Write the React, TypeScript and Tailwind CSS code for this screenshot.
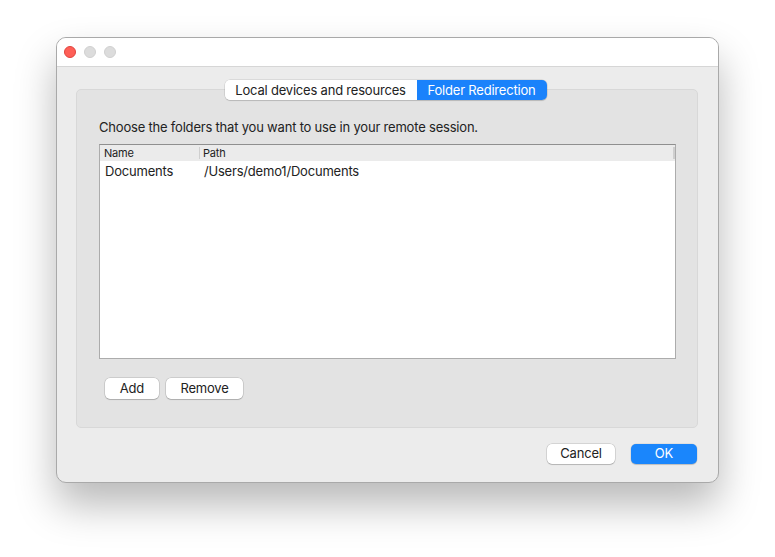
import React from "react";

export default function App() {
  return (
    <div
      className="w-[775px] h-[557px] bg-white pt-[37px] pl-[56px] tracking-[-0.2px]"
      style={{ fontFamily: 'Inter, "Liberation Sans", sans-serif' }}
    >
      <div className="w-[663px] h-[446px] rounded-[10px] border border-[#a9a9a9] bg-[#ececec] shadow-[0_22px_40px_rgba(0,0,0,0.28)] overflow-hidden flex flex-col">
        {/* title bar */}
        <div className="h-[29px] bg-white border-b border-[#d6d6d6] flex items-center pl-[7px] gap-[8px] shrink-0">
          <span className="w-[12px] h-[12px] rounded-full bg-[#fe5f57] border border-[#e0443e]" />
          <span className="w-[12px] h-[12px] rounded-full bg-[#dcdcdc] border border-[#d0d0d0]" />
          <span className="w-[12px] h-[12px] rounded-full bg-[#dcdcdc] border border-[#d0d0d0]" />
        </div>

        <div className="flex flex-col pl-[19px] pr-[20px] pt-[13px]">
          {/* tabs */}
          <div className="flex justify-center relative z-10 pr-[3px]">
            <div className="flex h-[20px] rounded-[5px] shadow-[0_0_0_0.5px_rgba(0,0,0,0.15),0_1px_1px_rgba(0,0,0,0.12)] overflow-hidden text-[13px] leading-[20px]">
              <div className="bg-white text-[#222] w-[192px] flex items-center justify-center">
                Local devices and resources
              </div>
              <div className="bg-[#1a82fb] text-white w-[130px] flex items-center justify-center">
                Folder Redirection
              </div>
            </div>
          </div>

          {/* group box */}
          <div className="-mt-[11px] h-[339px] rounded-[5px] border border-[#d8d8d8] bg-[#e3e3e3] flex flex-col pl-[22px] pr-[21px] pt-[24px]">
            <div className="text-[13px] leading-[26px] text-[#222]">
              Choose the folders that you want to use in your remote session.
            </div>
            <div className="mt-[4px] h-[215px] border border-[#acacac] border-t-[#8f8f8f] bg-white flex flex-col">
              <div className="h-[16px] bg-[#ebebeb] flex text-[11px] leading-[16px] text-[#222]">
                <div className="w-[100px] pl-[4px] border-r border-[#cfcfcf] my-[2px] leading-[12px]">Name</div>
                <div className="flex-1 pl-[3px] my-[2px] leading-[12px] border-r-2 border-[#cfcfcf]">Path</div>
              </div>
              <div className="flex text-[13px] leading-[20px] text-[#222]">
                <div className="w-[100px] pl-[5px]">Documents</div>
                <div className="flex-1 pl-[4px]">/Users/demo1/Documents</div>
              </div>
            </div>
            <div className="flex gap-[7px] mt-[19px] pl-[6px]">
              <button className="h-[21px] w-[54px] rounded-[5px] bg-white text-[13px] text-[#222] shadow-[0_0_0_0.5px_rgba(0,0,0,0.2),0_1px_1px_rgba(0,0,0,0.15)]">
                Add
              </button>
              <button className="h-[21px] w-[77px] rounded-[5px] bg-white text-[13px] text-[#222] shadow-[0_0_0_0.5px_rgba(0,0,0,0.2),0_1px_1px_rgba(0,0,0,0.15)]">
                Remove
              </button>
            </div>
          </div>

          {/* footer buttons */}
          <div className="flex justify-end gap-[16px] mt-[16px] mr-[1px]">
            <button className="h-[20px] w-[68px] rounded-[5px] bg-white text-[13px] text-[#222] shadow-[0_0_0_0.5px_rgba(0,0,0,0.2),0_1px_1px_rgba(0,0,0,0.15)]">
              Cancel
            </button>
            <button className="h-[20px] w-[66px] rounded-[5px] bg-[#1a86fc] text-[13px] text-white shadow-[0_0_0_0.5px_rgba(0,0,0,0.1),0_1px_1px_rgba(0,0,0,0.15)]">
              OK
            </button>
          </div>
        </div>
      </div>
    </div>
  );
}
